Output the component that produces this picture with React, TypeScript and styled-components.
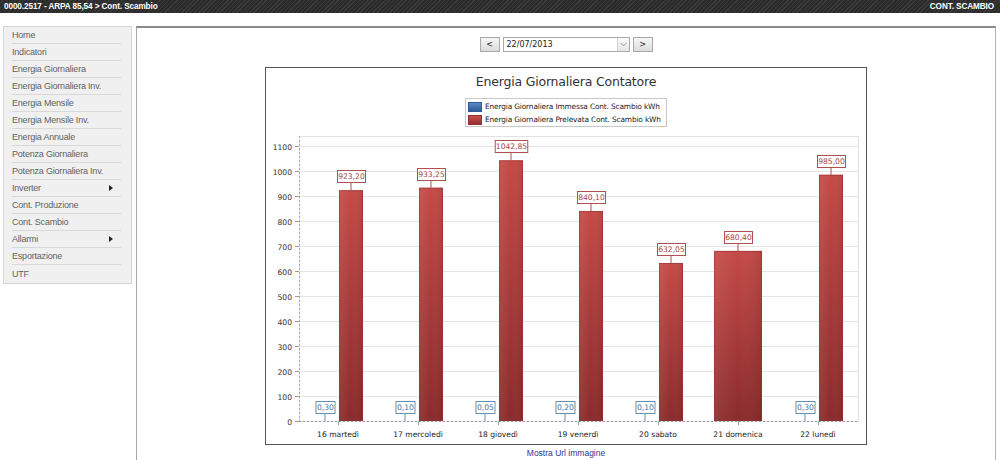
import React from 'react';
import styled, { createGlobalStyle } from 'styled-components';

const GlobalStyle = createGlobalStyle`
  html, body {
    margin: 0;
    padding: 0;
    background: #ffffff;
    font-family: "Liberation Sans", Arial, sans-serif;
  }
`;

// barra superiore scura
const TopBar = styled.header`
  height: 13px;
  display: flex;
  align-items: center;
  justify-content: space-between;
  padding: 0 6px 0 4px;
  background: repeating-linear-gradient(
    135deg,
    #2b2b2b 0px,
    #2b2b2b 2px,
    #3a3a3a 2px,
    #3a3a3a 3px
  );
  color: #ffffff;
  font-size: 8.2px;
  font-weight: bold;
  letter-spacing: -0.1px;
`;

const Layout = styled.div`
  display: flex;
  align-items: flex-start;
  padding-top: 13px;
`;

// menu laterale
const Sidebar = styled.nav`
  width: 129px;
  margin-left: 3px;
  padding: 0 10px 1px 8px;
  box-sizing: border-box;
  background: #f0f0f0;
  border: 1px solid #d6d6d6;
`;

const MenuItem = styled.div<{ $last?: boolean }>`
  height: 17px;
  display: flex;
  align-items: center;
  justify-content: space-between;
  font-size: 9px;
  color: #626262;
  letter-spacing: -0.2px;
  border-bottom: ${(p) => (p.$last ? 'none' : '1px solid #d9d9d9')};
  box-sizing: border-box;
  padding-right: 8px;
`;

const Arrow = styled.span`
  width: 0;
  height: 0;
  border-top: 3px solid transparent;
  border-bottom: 3px solid transparent;
  border-left: 4px solid #222;
`;

// pannello principale
const Main = styled.main`
  width: 860px;
  height: 434px;
  margin-left: 4px;
  border-top: 2px solid #8a8a8a;
  border-left: 1px solid #a8a8a8;
  border-right: 1px solid #b4b4b4;
  box-sizing: border-box;
  display: flex;
  flex-direction: column;
  align-items: center;
  padding-top: 9px;
`;

const DateNav = styled.div`
  display: flex;
  align-items: center;
  gap: 3px;
  height: 15px;
`;

const NavButton = styled.button`
  width: 20px;
  height: 15px;
  padding: 0;
  border: 1px solid #a9a9a9;
  background: linear-gradient(#f6f6f6, #dcdcdc);
  font-family: "DejaVu Sans", sans-serif;
  font-size: 8px;
  color: #222;
  line-height: 13px;
`;

const DateSelect = styled.div`
  width: 127px;
  height: 15px;
  box-sizing: border-box;
  border: 1px solid #aaaaaa;
  display: flex;
  align-items: center;
  justify-content: space-between;
  padding-left: 3px;
  font-family: "DejaVu Sans", sans-serif;
  font-size: 8px;
  color: #222;
  background: #fff;
`;

const DropBox = styled.span`
  width: 12px;
  height: 13px;
  box-sizing: border-box;
  border-left: 1px solid #cfcfcf;
  background: linear-gradient(#fafafa, #e6e6e6);
  display: flex;
  align-items: center;
  justify-content: center;
`;

const ChartBox = styled.section`
  margin-top: 15px;
  width: 602px;
  height: 378px;
  box-sizing: border-box;
  border: 1px solid #555;
  display: flex;
  flex-direction: column;
  align-items: center;
`;

const ChartTitle = styled.h2`
  margin: 6px 0 0;
  font-family: "DejaVu Sans", sans-serif;
  font-weight: normal;
  font-size: 12.5px;
  line-height: 15px;
  color: #333;
  letter-spacing: -0.2px;
`;

const Legend = styled.div`
  margin-top: 9px;
  width: 202px;
  height: 29px;
  box-sizing: border-box;
  border: 1px solid #c8c8c8;
  display: flex;
  flex-direction: column;
  justify-content: center;
  gap: 1px;
  padding-left: 2px;
  padding-top: 1px;
`;

const LegendRow = styled.div`
  display: flex;
  align-items: center;
  gap: 3px;
  height: 12px;
  font-family: "DejaVu Sans", sans-serif;
  font-size: 7.4px;
  color: #222;
  letter-spacing: -0.15px;
`;

const Swatch = styled.span<{ $color: string; $dark: string }>`
  width: 14px;
  height: 10px;
  flex-shrink: 0;
  background: linear-gradient(${(p) => p.$color}, ${(p) => p.$dark});
  border: 1px solid ${(p) => p.$dark};
  box-sizing: border-box;
`;

const PlotSvg = styled.svg`
  display: block;
  margin-top: 4px;
  font-family: "DejaVu Sans", sans-serif;
`;

const UrlLink = styled.a`
  margin-top: 3px;
  font-size: 8.5px;
  color: #333399;
  text-decoration: none;
`;

const menu = [
  'Home',
  'Indicatori',
  'Energia Giornaliera',
  'Energia Giornaliera Inv.',
  'Energia Mensile',
  'Energia Mensile Inv.',
  'Energia Annuale',
  'Potenza Giornaliera',
  'Potenza Giornaliera Inv.',
  'Inverter',
  'Cont. Produzione',
  'Cont. Scambio',
  'Allarmi',
  'Esportazione',
  'UTF',
];
const withArrow = ['Inverter', 'Allarmi'];

const days = [
  '16 martedì',
  '17 mercoledì',
  '18 giovedì',
  '19 venerdì',
  '20 sabato',
  '21 domenica',
  '22 lunedì',
];
const immessa: (number | null)[] = [0.3, 0.1, 0.05, 0.2, 0.1, null, 0.3];
const prelevata = [923.2, 933.25, 1042.85, 840.1, 632.05, 680.4, 985.0];

// coordinate della pagina traslate nell'svg
const OX = 266;
const OY = 132;
const X = (v: number) => v - OX;
const Y = (v: number) => v - OY;
const PLOT_L = 299;
const PLOT_R = 858;
const PLOT_T = 137;
const BASE = 422;
const SCALE = 0.25;
const CAT0 = 338;
const CAT_W = 80;

const fmt = (n: number) => n.toFixed(2).replace('.', ',');

const ValueLabel = ({
  cx,
  top,
  text,
  stroke,
  fill,
}: {
  cx: number;
  top: number;
  text: string;
  stroke: string;
  fill: string;
}) => {
  const w = text.length * 4.5 + 1;
  const h = 12;
  const bottom = top - 8;
  return (
    <g>
      <line x1={X(cx)} x2={X(cx)} y1={Y(bottom)} y2={Y(top)} stroke={stroke} strokeWidth={1} />
      <rect
        x={X(cx - w / 2) + 0.5}
        y={Y(bottom - h) + 0.5}
        width={w}
        height={h}
        fill="#fff"
        stroke={stroke}
        strokeWidth={1}
      />
      <text x={X(cx) + 0.5} y={Y(bottom) - 3} textAnchor="middle" fontSize={7.6} fill={fill}>
        {text}
      </text>
    </g>
  );
};

const Chart = () => {
  const ticks = Array.from({ length: 12 }, (_, i) => i * 100);
  return (
    <PlotSvg width={600} height={311} viewBox="0 0 600 311">
      <defs>
        <linearGradient id="redBar" x1="0" y1="0" x2="0" y2="1">
          <stop offset="0" stopColor="#c44a47" />
          <stop offset="1" stopColor="#8a2b2b" />
        </linearGradient>
        <linearGradient id="redShade" x1="0" y1="0" x2="1" y2="0">
          <stop offset="0" stopColor="#ffffff" stopOpacity="0.08" />
          <stop offset="0.5" stopColor="#ffffff" stopOpacity="0" />
          <stop offset="1" stopColor="#000000" stopOpacity="0.08" />
        </linearGradient>
      </defs>
      <rect
        x={X(PLOT_L) + 0.5}
        y={Y(PLOT_T) + 0.5}
        width={PLOT_R - PLOT_L}
        height={BASE - PLOT_T}
        fill="none"
        stroke="#e2e2e2"
      />
      {ticks.map((t) => {
        const y = Y(BASE - t * SCALE) + 0.5;
        return (
          <g key={t}>
            <line x1={X(PLOT_L)} x2={X(PLOT_R)} y1={y} y2={y} stroke="#e4e4e4" />
            <line x1={X(PLOT_L - 4)} x2={X(PLOT_L)} y1={y} y2={y} stroke="#999" />
            <text x={X(292)} y={y + 3} textAnchor="end" fontSize={7.6} fill="#333">
              {t}
            </text>
          </g>
        );
      })}
      <line
        x1={X(PLOT_L) + 0.5}
        x2={X(PLOT_L) + 0.5}
        y1={Y(PLOT_T)}
        y2={Y(BASE)}
        stroke="#aaa"
        strokeDasharray="2 2"
      />
      {prelevata.map((v, i) => {
        const c = CAT0 + CAT_W * i;
        const b = immessa[i];
        const wide = b === null;
        const rx = wide ? c - 24 : c + 1;
        const rw = wide ? 48 : 24;
        const top = BASE - v * SCALE;
        const rcx = rx + rw / 2;
        return (
          <g key={i}>
            <rect x={X(rx)} y={Y(top)} width={rw} height={BASE - top} fill="url(#redBar)" />
            <rect x={X(rx)} y={Y(top)} width={rw} height={BASE - top} fill="url(#redShade)" />
            <rect
              x={X(rx) + 0.5}
              y={Y(top) + 0.5}
              width={rw - 1}
              height={BASE - top - 1}
              fill="none"
              stroke="#9a3333"
              strokeOpacity={0.6}
            />
            <ValueLabel cx={Math.round(rcx)} top={Math.round(top)} text={fmt(v)} stroke="#b05050" fill="#a84444" />
            {b !== null && (
              <ValueLabel cx={c - 13} top={BASE} text={fmt(b)} stroke="#6a90b0" fill="#4675a0" />
            )}
            <line x1={X(c) + 0.5} x2={X(c) + 0.5} y1={Y(BASE)} y2={Y(BASE) + 4} stroke="#999" />
            <text x={X(c)} y={Y(438)} textAnchor="middle" fontSize={7.6} fill="#222">
              {days[i]}
            </text>
          </g>
        );
      })}
      <line
        x1={X(PLOT_L)}
        x2={X(PLOT_R)}
        y1={Y(BASE) + 0.5}
        y2={Y(BASE) + 0.5}
        stroke="#999"
        strokeDasharray="2 2"
      />
    </PlotSvg>
  );
};

const App = () => {
  return (
    <>
      <GlobalStyle />
      <TopBar>
        <span>0000.2517 - ARPA 85,54 &gt; Cont. Scambio</span>
        <span>CONT. SCAMBIO</span>
      </TopBar>
      <Layout>
        <Sidebar>
          {menu.map((m, i) => (
            <MenuItem key={m} $last={i === menu.length - 1}>
              <span>{m}</span>
              {withArrow.includes(m) && <Arrow />}
            </MenuItem>
          ))}
        </Sidebar>
        <Main>
          <DateNav>
            <NavButton>&lt;</NavButton>
            <DateSelect>
              <span>22/07/2013</span>
              <DropBox>
                <svg width="7" height="5" viewBox="0 0 7 5">
                  <path d="M0.5 0.8 L3.5 4 L6.5 0.8" fill="none" stroke="#999" strokeWidth="1" />
                </svg>
              </DropBox>
            </DateSelect>
            <NavButton>&gt;</NavButton>
          </DateNav>
          <ChartBox>
            <ChartTitle>Energia Giornaliera Contatore</ChartTitle>
            <Legend>
              <LegendRow>
                <Swatch $color="#5a8ac6" $dark="#2f5b94" />
                Energia Giornaliera Immessa Cont. Scambio kWh
              </LegendRow>
              <LegendRow>
                <Swatch $color="#c8504c" $dark="#973030" />
                Energia Giornaliera Prelevata Cont. Scambio kWh
              </LegendRow>
            </Legend>
            <Chart />
          </ChartBox>
          <UrlLink href="#">Mostra Url immagine</UrlLink>
        </Main>
      </Layout>
    </>
  );
};

export default App;
